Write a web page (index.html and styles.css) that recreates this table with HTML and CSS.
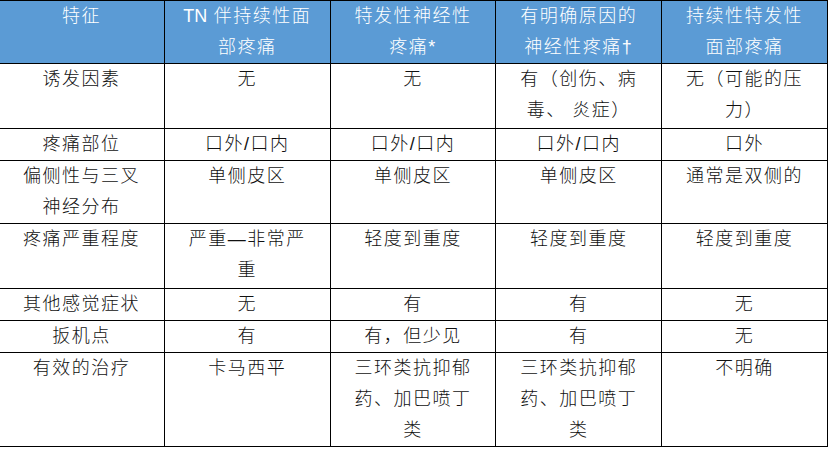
FILE: index.html
```html
<!DOCTYPE html>
<html lang="zh-CN">
<head>
<meta charset="utf-8">
<title>特征对比表</title>
<link rel="stylesheet" href="styles.css">
</head>
<body>
<table class="cmp">
  <thead>
    <tr>
      <th>特征</th>
      <th><span class="latin">TN</span> 伴持续性面部疼痛</th>
      <th>特发性神经性疼痛*</th>
      <th>有明确原因的神经性疼痛†</th>
      <th>持续性特发性面部疼痛</th>
    </tr>
  </thead>
  <tbody>
    <tr class="loose">
      <td>诱发因素</td>
      <td>无</td>
      <td>无</td>
      <td>有（创伤、病毒、 炎症）</td>
      <td>无（可能的压力）</td>
    </tr>
    <tr>
      <td>疼痛部位</td>
      <td>口外/口内</td>
      <td>口外/口内</td>
      <td>口外/口内</td>
      <td>口外</td>
    </tr>
    <tr>
      <td>偏侧性与三叉神经分布</td>
      <td>单侧皮区</td>
      <td>单侧皮区</td>
      <td>单侧皮区</td>
      <td>通常是双侧的</td>
    </tr>
    <tr class="loose">
      <td>疼痛严重程度</td>
      <td>严重—非常严重</td>
      <td>轻度到重度</td>
      <td>轻度到重度</td>
      <td>轻度到重度</td>
    </tr>
    <tr>
      <td>其他感觉症状</td>
      <td>无</td>
      <td>有</td>
      <td>有</td>
      <td>无</td>
    </tr>
    <tr>
      <td>扳机点</td>
      <td>有</td>
      <td>有，但少见</td>
      <td>有</td>
      <td>无</td>
    </tr>
    <tr>
      <td>有效的治疗</td>
      <td>卡马西平</td>
      <td>三环类抗抑郁药、加巴喷丁类</td>
      <td>三环类抗抑郁药、加巴喷丁类</td>
      <td>不明确</td>
    </tr>
  </tbody>
</table>
</body>
</html>
```

FILE: styles.css
```css
html, body {
  margin: 0;
  padding: 0;
  background: #ffffff;
}

.cmp {
  margin-left: -2px;
  width: 830px;
  table-layout: fixed;
  border-collapse: collapse;
  font-family: "Liberation Sans", "Noto Sans CJK SC", sans-serif;
  font-size: 18px;
  font-weight: 300;
  letter-spacing: 1.5px;
  line-height: 31px;
  color: #111111;
}

.cmp th,
.cmp td {
  border: 1px solid #000000;
  padding: 0 16px;
  text-align: center;
  vertical-align: top;
  font-weight: 300;
}

.cmp .latin {
  letter-spacing: 0;
}

.cmp tr.loose td {
  padding-bottom: 2px;
}

.cmp th {
  background: #5b9bd5;
  color: #ffffff;
}
```
